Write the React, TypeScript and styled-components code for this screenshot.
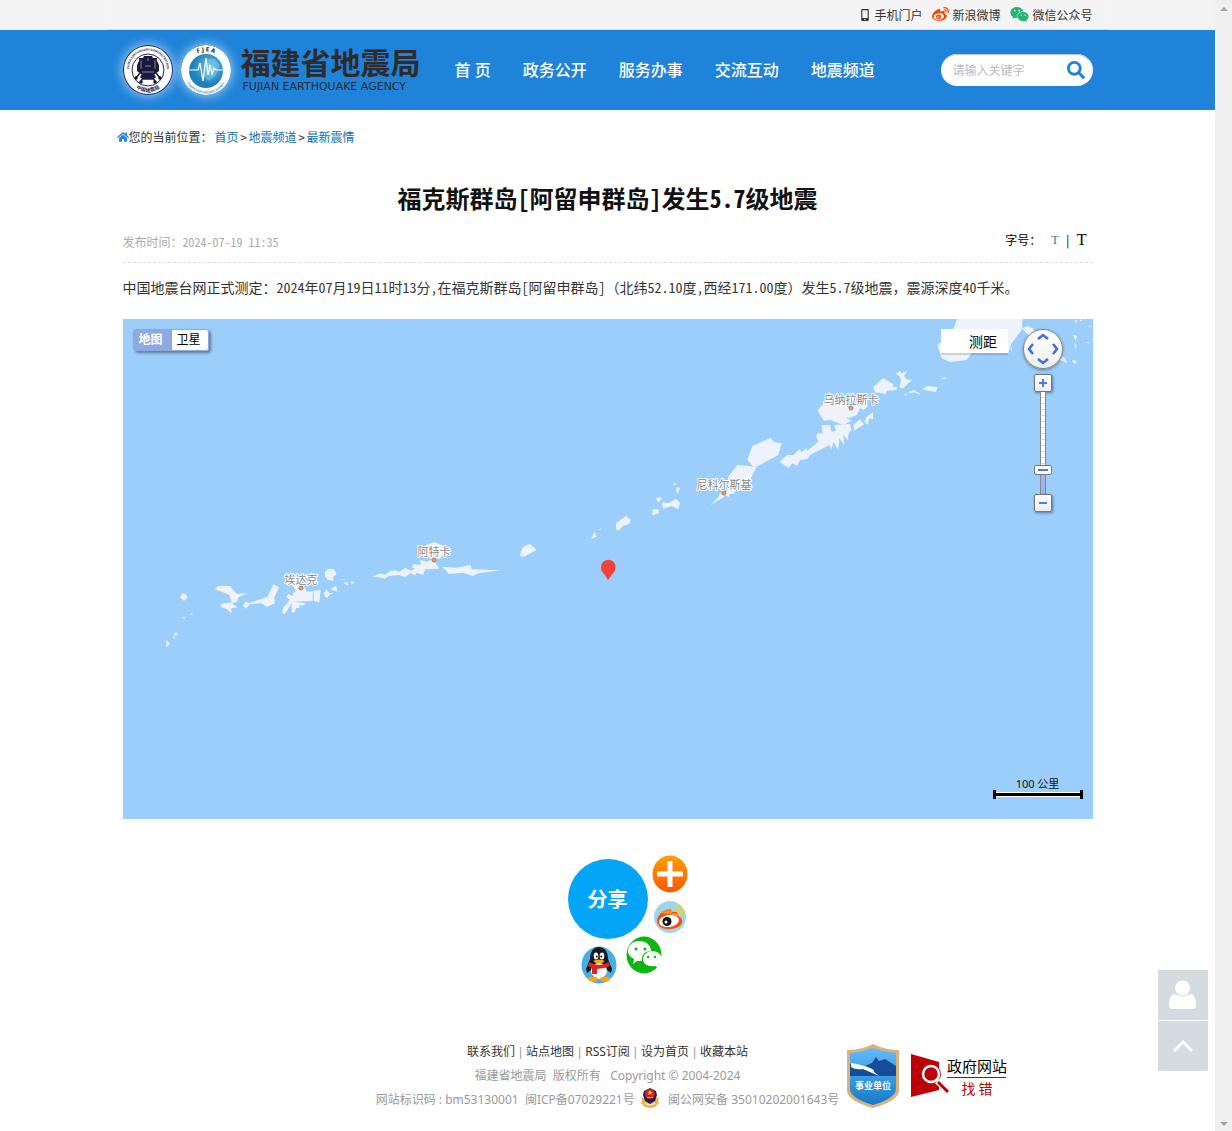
import React from "react";
import styled, { createGlobalStyle } from "styled-components";
import { FaHome, FaMobileAlt, FaSearch, FaWeibo, FaWeixin } from "react-icons/fa";

const song = `"Noto Sans CJK SC", sans-serif`;
const hei = `"Noto Sans", "Noto Sans CJK SC", sans-serif`;
const blue = "#1f83d9";

const GlobalStyle = createGlobalStyle`
  *, *::before, *::after { box-sizing: border-box; }
  body { margin: 0; background: #fff; color: #333; font: 12px/24px ${song}; }
  h1, p { margin: 0; }
  a { color: inherit; text-decoration: none; }
  button { border: 0; padding: 0; font: inherit; cursor: pointer; }
  svg { display: block; }
`;

const Shell = styled.div`
  display: grid;
  grid-template-columns: minmax(0, 1fr) 17px;
  min-height: 100vh;
`;

const ScrollRail = styled.div`
  display: flex;
  flex-direction: column;
  justify-content: space-between;
  align-items: center;
  padding: 7px 0 5px;
  background: #f0f0f0;
`;

const RailArrow = styled.span<{ $down?: boolean }>`
  border: 4px solid transparent;
  border-top: ${(p) => (p.$down ? "4px solid #a3a3a3" : "0")};
  border-bottom: ${(p) => (p.$down ? "0" : "4px solid #a3a3a3")};
`;

const Container = styled.div`
  width: 100%;
  max-width: 1000px;
  margin: 0 auto;
  padding: 0 15px;
`;

const TopBar = styled.div`
  background: #f3f3f3;
`;

const TopLinks = styled(Container)`
  display: flex;
  justify-content: flex-end;
  align-items: center;
  gap: 10px;
  height: 30px;
  border-bottom: 1px solid #d5dfe8;
  background: #f4f4f4;
`;

const TopLink = styled.a`
  display: flex;
  align-items: center;
  gap: 3px;
`;

const Header = styled.header`
  background: ${blue};
`;

const HeaderRow = styled(Container)`
  display: flex;
  align-items: center;
  height: 80px;
`;

const Brand = styled.a`
  display: flex;
  align-items: center;
  gap: 8px;
  color: #2f2a2c;
`;

const Emblem = styled.svg`
  width: 50px;
  height: 50px;
  border-radius: 50%;
  box-shadow: 0 0 12px rgba(255, 255, 255, 0.7);
`;

const BrandText = styled.span`
  display: flex;
  flex-direction: column;
  gap: 4px;
  padding: 0 0 2px 2px;
`;

const BrandName = styled.span`
  font: 700 30px/32px ${song};
`;

const BrandLatin = styled.span`
  padding-left: 2px;
  font: 11px/12px "DejaVu Sans", sans-serif;
`;

const Nav = styled.nav`
  display: flex;
  gap: 32px;
  margin-left: 34px;
  color: #fff;
  font: 500 16px/24px ${hei};
`;

const SearchBox = styled.form`
  display: flex;
  align-items: center;
  width: 152px;
  height: 32px;
  margin-left: auto;
  padding: 0 8px 0 12px;
  border-radius: 16px;
  background: #fff;
  box-shadow: inset 0 1px 1px #bbb;
`;

const SearchInput = styled.input`
  flex: 1;
  min-width: 0;
  border: 0;
  padding: 0;
  outline: 0;
  background: transparent;
  font: 12px/24px ${song};
  &::placeholder { color: #bbb; }
`;

const SearchButton = styled.button`
  background: none;
  color: ${blue};
`;

const Crumbs = styled.nav`
  display: flex;
  align-items: center;
  height: 54px;
  margin-left: -6px;
  a { color: #0c6fb5; }
`;

const CrumbLabel = styled.span`
  padding-right: 2px;
`;

const CrumbMark = styled.span`
  width: 10px;
  text-align: center;
`;

const Title = styled.h1`
  margin-top: 16px;
  color: #111;
  text-align: center;
  font: 700 24px/36px ${song};
  font-feature-settings: "hwid";
`;

const Meta = styled.div`
  display: flex;
  justify-content: space-between;
  align-items: center;
  height: 47px;
  padding-top: 6px;
  border-bottom: 1px dashed #ddd;
  color: #aaa;
  font-feature-settings: "hwid";
`;

const FontSizes = styled.div`
  display: flex;
  align-items: center;
  gap: 6px;
  height: 24px;
  margin: -4px 6px 0 0;
  color: #000;
`;

const SizeLabel = styled.span`
  padding-right: 4px;
`;

const SizeButton = styled.button<{ $large?: boolean }>`
  background: none;
  color: ${(p) => (p.$large ? "#000" : "#1479c4")};
  font: ${(p) => (p.$large ? "16px" : "12px")}/24px "Liberation Serif", serif;
`;

const Story = styled.p`
  padding: 10px 0 17px;
  font: 14px/29px ${song};
`;

const HalfWidth = styled.span`
  font-feature-settings: "hwid";
`;

const MapFrame = styled.section`
  position: relative;
  height: 500px;
  overflow: hidden;
  background: #9bcefa;
`;

const MapCanvas = styled.svg`
  width: 100%;
  height: 100%;
`;

const MapTypes = styled.div`
  position: absolute;
  top: 10px;
  left: 10px;
  display: flex;
  border-radius: 3px;
  box-shadow: 2px 2px 3px rgba(0, 0, 0, 0.4);
`;

const MapType = styled.button<{ $active?: boolean }>`
  width: 38px;
  height: 22px;
  padding: 0 2px 2px 0;
  border: 1px solid #8ea8e0;
  border-radius: ${(p) => (p.$active ? "3px 0 0 3px" : "0 3px 3px 0")};
  background: ${(p) => (p.$active ? "#8ea8e0" : "#fff")};
  color: ${(p) => (p.$active ? "#fff" : "#000")};
  font: ${(p) => (p.$active ? 700 : 400)} 12px/18px ${song};
`;

const Measure = styled.button`
  position: absolute;
  top: 10px;
  right: 85px;
  width: 67px;
  height: 24px;
  padding-left: 18px;
  background: #fff;
  box-shadow: 0 2px 0 rgba(0, 0, 0, 0.15);
  color: #000;
  font: 14px/24px ${song};
`;

const MapControl = styled.div`
  position: absolute;
  top: 10px;
  right: 30px;
  display: flex;
  flex-direction: column;
  align-items: center;
`;

const PanPad = styled.button`
  width: 40px;
  height: 40px;
  margin-bottom: 5px;
  border: 1px solid #888;
  border-radius: 50%;
  background: linear-gradient(#fff, #eee);
  box-shadow: 0 1px 3px rgba(0, 0, 0, 0.4);
`;

const ZoomButton = styled.button`
  display: grid;
  place-items: center;
  width: 18px;
  height: 18px;
  border: 1px solid #777;
  border-radius: 2px;
  background: linear-gradient(#fff, #eee);
  box-shadow: 1px 1px 3px rgba(0, 0, 0, 0.4);
`;

const ZoomSlider = styled.input`
  appearance: none;
  writing-mode: vertical-lr;
  direction: rtl;
  width: 18px;
  height: 102px;
  margin: 0;
  background:
    linear-gradient(90deg, #888 1px, transparent 1px 5px, #888 5px) center / 6px 100% no-repeat,
    linear-gradient(transparent 78px, #9db5f8 78px) center / 6px 100% no-repeat,
    repeating-linear-gradient(#fff 0 5px, #ddd 5px 6px) center / 6px 100% no-repeat;
  &::-webkit-slider-thumb {
    appearance: none;
    width: 18px;
    height: 10px;
    border: 1px solid #777;
    border-radius: 2px;
    background: linear-gradient(#4c7de0, #4c7de0) center / 10px 2px no-repeat, #fff;
  }
`;

const ScaleBar = styled.div`
  position: absolute;
  right: 10px;
  bottom: 20px;
  width: 90px;
  color: #111;
  text-align: center;
  font: 11px/12px ${hei};
`;

const Rule = styled.div`
  display: flex;
  align-items: center;
  height: 9px;
  border: solid #000;
  border-width: 0 3px;
  &::before {
    content: "";
    flex: 1;
    height: 5px;
    border: solid #fff;
    border-width: 1px 0;
    background: #000;
  }
`;

const Share = styled.section`
  position: relative;
  width: 120px;
  height: 130px;
  margin: 36px auto 0;
  left: 20px;
`;

const ShareMain = styled.button`
  width: 80px;
  height: 80px;
  margin-top: 4px;
  border-radius: 50%;
  background: #03a5f6;
  color: #fff;
  font: 700 20px/80px ${song};
`;

const ShareIcon = styled.button<{ $x: number; $y: number }>`
  position: absolute;
  left: ${(p) => p.$x}px;
  top: ${(p) => p.$y}px;
  background: none;
`;

const Footer = styled.footer`
  display: grid;
  grid-template-columns: 1fr auto 1fr;
  padding: 55px 0 16px;
  color: #999;
  text-align: center;
  font: 12px/24px ${hei};
  white-space: pre;
`;

const FooterText = styled.div`
  grid-column: 2;
`;

const FooterLinks = styled.p`
  display: flex;
  justify-content: center;
  a { color: #333; }
`;

const FooterBar = styled.span`
  padding: 0 4px;
  font-family: "Liberation Sans", sans-serif;
`;

const FooterRecord = styled.p`
  display: flex;
  justify-content: center;
  svg { margin: 0 2px; }
`;

const Badges = styled.div`
  display: flex;
  align-items: center;
  gap: 12px;
  padding-left: 8px;
`;

const SideTools = styled.div`
  position: fixed;
  right: 24px;
  bottom: 60px;
  display: grid;
  gap: 1px;
`;

const SideButton = styled.button`
  display: grid;
  place-items: center;
  width: 50px;
  height: 50px;
  background: #d4dbe1;
`;

/* Island outlines, grouped by map tile; each tile is drawn at three units per pixel. */
const tiles = [
  {
    at: [600, 360],
    shapes: [
      "685,120 735,118 750,160 740,175 755,182 730,195 690,180 672,182 652,152 672,128",
      "735,160 755,130 800,125 803,140 790,150 780,145 770,165 745,175",
      "815,120 825,120 820,137",
      "442,300 457,258 512,234 522,246 545,250 535,285 470,320 458,318",
      "385,350 412,315 470,320 450,360 452,385 410,388 400,402 388,402 388,412 375,405 370,412 330,437 355,412 358,402 380,395",
      "538,305 562,284 580,286 598,267 605,276 620,265 622,272 655,245 648,225 656,218 668,222 665,196 690,195 695,215 708,212 703,195 750,192 755,212 748,215 742,240 730,225 732,255 718,235 715,270 700,245 695,268 688,255 660,270 630,285 622,297 600,300 592,318 578,310 565,323",
      "760,195 780,178 792,193 762,212",
      "793,185 800,170 819,157 819,178 808,175 803,195",
      "820,80 850,54 868,66 880,72 878,82 892,82 890,90 862,92 855,103 840,98 825,98",
      "888,42 900,33 905,40 922,34 912,48 920,58 937,61 925,70 908,86 898,82 903,62 900,50",
      "912,104 924,98 916,108",
      "926,95 940,90 963,102 955,103 945,97 930,100",
      "967,86 985,78 1013,82 1008,96 975,90",
      "1022,57 1035,52 1040,57",
      "219,374 224,366 228,375",
      "228,388 232,380 240,385 232,402",
      "166,416 180,410 186,416 176,426",
      "186,432 190,426 205,430 228,416 240,428 235,448 215,438 190,446",
      "158,448 175,448 177,460 157,466",
      "48,490 78,468 92,478 88,492 68,498 56,512 48,508",
      "-27,536 -16,516 -10,530",
      "-6,510 3,504 0,510",
    ],
  },
  {
    at: [150, 520],
    shapes: [
      "195,208 205,198 240,198 260,222 292,220 265,232 262,245 246,250 262,262 243,265 245,280 228,266 213,262 213,252 245,247 238,225 215,215",
      "352,230 370,193 387,202 373,232 375,250 350,261 335,250 300,252 288,266 280,258 286,245 296,250",
      "425,190 460,195 470,215 488,214 488,243 428,245 467,250 462,256 450,256 447,264 438,264 435,277 425,278 425,250 405,282 396,278 400,262 420,240 408,230 415,222 428,228 430,218 438,214",
      "490,212 512,210 508,246 492,244",
      "525,155 535,147 552,148 560,162 550,170 550,182 535,180 525,170",
      "522,220 530,208 538,219 550,219 538,225 530,235 524,228",
      "540,208 558,198 563,215",
      "565,178 587,178 586,180",
      "580,190 592,186 596,197",
      "603,182 614,187 604,194",
      "90,232 98,219 110,226 110,235 102,243",
      "93,289 108,293 104,297",
      "120,284 125,279 129,284",
      "70,352 78,333 84,347 76,345 72,357",
      "50,360 60,372 48,382",
      "668,170 690,160 705,165 718,155 735,150 748,155 765,144 785,152 795,145 786,142 790,132 812,135 810,120 830,125 850,118 868,146 825,148 820,165 800,158 795,166 780,160 765,172 748,165 715,168 705,176 688,172",
      "828,75 855,66 880,78 885,100 870,116 840,116 830,100",
      "877,141 920,143 962,135 965,148 1052,151 985,160 968,168 940,158 895,162 888,152",
      "1112,98 1118,82 1140,72 1160,90 1122,110 1110,108",
    ],
  },
  {
    at: [900, 310],
    shapes: [
      "172,27 368,27 365,60 335,100 325,130 215,130 200,150 150,156 125,145 112,105 125,95 125,85 160,57",
      "365,55 385,48 400,57 415,80 400,90",
      "478,150 490,138 502,158",
      "516,152 526,150 530,160 520,160",
      "523,98 530,106 526,122",
      "520,75 532,78 526,92",
      "525,30 532,32 528,45",
      "540,25 546,32 540,34",
      "558,97 570,97 566,101",
      "565,50 572,45 572,52",
      "332,112 336,116 333,126",
    ],
  },
];

const towns = [
  { name: "乌纳拉斯卡", x: 851, y: 404, dot: [851, 408] },
  { name: "尼科尔斯基", x: 724, y: 489, dot: [724, 493] },
  { name: "阿特卡", x: 434, y: 556, dot: [434, 560] },
  { name: "埃达克", x: 301, y: 584, dot: [301, 588] },
];

function AdministrationEmblem() {
  return (
    <Emblem viewBox="0 0 50 50">
      <circle cx="25" cy="25" r="25" fill="#28234d" />
      <circle cx="25" cy="25" r="24" fill="#fff" />
      <circle cx="25" cy="25" r="16" fill="none" stroke="#28234d" strokeWidth="1" />
      <path id="ringTop" d="M8 33A19 19 0 1 1 42 33" fill="none" />
      <path id="ringLow" d="M8 38A21 21 0 0 0 42 38" fill="none" />
      <g fill="#28234d" fontFamily={hei} fontWeight="700" textAnchor="middle">
        <text fontSize="3"><textPath href="#ringTop" startOffset="50%">CHINA EARTHQUAKE ADMINISTRATION</textPath></text>
        <text fontSize="5"><textPath href="#ringLow" startOffset="50%">中国地震局</textPath></text>
      </g>
      <path d="M21 11h8l1 2h4v3l2 4v6l-4 3H18l-4-3v-6l2-4v-3h4z" fill="#1d183d" />
      <path d="M20 28h10l2 4-3 2h-8l-3-2zM17 28l-4 5M33 28l4 5M20 33l-2 3M30 33l2 3" fill="#1d183d" stroke="#1d183d" strokeWidth="1.5" />
      <path d="M18 15v9M32 15v9M22 21h6M19 27h12M25 13v3" stroke="#fff" strokeWidth=".8" opacity=".6" />
      <g fill="#1d183d"><circle cx="13" cy="33" r="1.800" /><circle cx="18" cy="37" r="1.800" /><circle cx="32" cy="37" r="1.800" /><circle cx="37" cy="33" r="1.800" /></g>
    </Emblem>
  );
}

function FujianEmblem() {
  return (
    <Emblem viewBox="0 0 50 50">
      <radialGradient id="seaGlobe" cx=".6" cy=".4">
        <stop offset="0" stopColor="#71c3e8" />
        <stop offset="1" stopColor="#1e7fb9" />
      </radialGradient>
      <circle cx="25" cy="25" r="25" fill="#fff" />
      <circle cx="25" cy="26" r="17" fill="url(#seaGlobe)" />
      <path d="M24 14l10 0 5 6-4 10-7 6-6-5z" fill="#8bd0ec" opacity=".45" />
      <path d="M8 25h9l2-7 3 18 3-23 2 17 2-10 2 9 2-6 2 2h7" fill="none" stroke="#fff" strokeWidth="1.2" />
      <path id="fjTop" d="M9 16A18 18 0 0 1 41 16" fill="none" />
      <path id="fjLow" d="M4 33A22 22 0 0 0 46 33" fill="none" />
      <g fontFamily={hei} fontWeight="700" textAnchor="middle">
        <text fontSize="6" fill="#222"><textPath href="#fjTop" startOffset="50%">F J E A</textPath></text>
        <text fontSize="3" fill="#3b9ad3"><textPath href="#fjLow" startOffset="50%">FUJIAN EARTHQUAKE AGENCY</textPath></text>
      </g>
    </Emblem>
  );
}

function IslandMap() {
  return (
    <MapCanvas viewBox="123 319 970 500" preserveAspectRatio="xMidYMid slice" role="img" aria-label="震中位置">
      {tiles.map((tile) => (
        <g key={tile.at.join()} transform={`translate(${tile.at.join()}) scale(.33333)`} fill="#eef2fb">
          {tile.shapes.map((points) => <polygon key={points} points={points} />)}
        </g>
      ))}
      {towns.map((town) => (
        <g key={town.name}>
          <text x={town.x} y={town.y} textAnchor="middle" fontFamily={song} fontSize="11" fill="#888" stroke="#fff" strokeWidth="2" paintOrder="stroke">{town.name}</text>
          <circle cx={town.dot[0]} cy={town.dot[1]} r="2" fill="#dda278" stroke="#b77b55" />
        </g>
      ))}
      <path d="M608 580l-3-5c-3-3-4-5-4-8a7.300 7.300 0 0 1 14.600 0c0 3-1 5-4 8z" fill="#f5413a" />
    </MapCanvas>
  );
}

const MoreIcon = () => (
  <svg width="36" height="38" viewBox="0 0 36 38">
    <linearGradient id="moreFill" x2="0" y2="1"><stop stopColor="#ffa000" /><stop offset="1" stopColor="#ff5500" /></linearGradient>
    <ellipse cx="18" cy="19" rx="17.500" ry="18.500" fill="url(#moreFill)" />
    <path d="M18 6v26M5 19h26" stroke="#fff" strokeWidth="5" />
  </svg>
);

const WeiboIcon = () => (
  <svg width="32" height="32" viewBox="0 0 32 32">
    <circle cx="16" cy="16" r="16" fill="#9fd5e8" />
    <path d="M3 20C3 13 12 7 16 8c2 1 1 3 1 4 3-2 8-2 8 1v3c4 1 5 7-1 10-8 4-20 3-21-6z" fill="#ef5019" />
    <path d="M7 12c5-5 9-5 10-2v3c3-2 8-1 8 2z" fill="#f9902a" />
    <ellipse cx="15" cy="20" rx="10" ry="6" fill="#fff" transform="rotate(-8 15 20)" />
    <circle cx="13" cy="20.500" r="4.500" fill="#111" />
    <circle cx="12" cy="21" r="1.500" fill="#fff" />
    <path d="M20 10c4-1 6 2 5 5M21 5c6 0 9 4 8 10" fill="none" stroke="#e9d047" strokeWidth="2.500" />
  </svg>
);

const WechatIcon = () => (
  <svg width="36" height="38" viewBox="0 0 36 38">
    <ellipse cx="18" cy="19" rx="17.500" ry="18.500" fill="#0ab60f" />
    <path d="M13 5c7 0 12 4 12 10-6 0-10 4-9 10l-5 0-4 3 1-5c-3-2-6-4-6-8 0-6 5-10 11-10z" fill="#fff" />
    <path d="M26 15c6 0 10 4 10 8 0 3-2 5-4 6l1 3-4-2c-7 1-12-2-12-7 0-4 4-8 9-8z" fill="#fff" />
    <g fill="#0ab60f"><circle cx="10" cy="13" r="1.500" /><circle cx="19" cy="13" r="1.500" /><circle cx="22" cy="21" r="1.200" /><circle cx="29" cy="21" r="1.200" /></g>
  </svg>
);

const QqIcon = () => (
  <svg width="36" height="38" viewBox="0 0 36 38">
    <ellipse cx="18" cy="19" rx="17.500" ry="18.500" fill="#48aee6" />
    <path d="M9 13C9 5 13 1 18 1s9 4 9 12l4 10-1 4-4-3-2 9H12l-2-9-4 3-1-4z" fill="#151a20" />
    <ellipse cx="18" cy="25" rx="8" ry="8" fill="#fff" />
    <ellipse cx="15" cy="10" rx="2.300" ry="3.500" fill="#fff" /><ellipse cx="21" cy="10" rx="2.300" ry="3.500" fill="#fff" />
    <circle cx="15.700" cy="10.500" r="1" /><circle cx="20.300" cy="10.500" r="1" />
    <path d="M12 15q6-3 12 0-6 5-12 0z" fill="#f8a51b" />
    <path d="M8 16q10 6 20 0l1 4q-6 3-13 3v5h-5v-6l-4-2z" fill="#dd241d" />
    <ellipse cx="12" cy="33" rx="5" ry="2.500" fill="#f6a61c" /><ellipse cx="24" cy="33" rx="5" ry="2.500" fill="#f6a61c" />
  </svg>
);

const PoliceIcon = () => (
  <svg width="20" height="20" viewBox="0 0 20 20">
    <path d="M1 9l3 1 4 5h4l4-5 3-1-1 4 1 2-4 4-5 1-5-1-4-4 1-2z" fill="#e8b34b" />
    <path d="M10 0l6 3 1 4-2 6-5 3-5-3-2-6 1-4z" fill="#20204f" />
    <circle cx="10" cy="6" r="5" fill="#d91e1b" />
    <path d="M10 2l1 2h2l-2 1 1 2-2-1-2 1 1-2-2-1h2zM7 9h6v1H7z" fill="#f5c94a" />
    <path d="M5 14q5 4 10 0v2q-5 3-10 0z" fill="#f9e5a4" />
  </svg>
);

const InstitutionBadge = () => (
  <svg width="52" height="64" viewBox="0 0 52 64" role="img">
    <linearGradient id="shieldFill" x2="0" y2="1"><stop stopColor="#62bbfb" /><stop offset="1" stopColor="#147ac8" /></linearGradient>
    <path d="M0 6q14 0 26-6 12 6 26 6v40q0 11-26 18Q0 57 0 46z" fill="#ddb17a" />
    <path d="M3 9q12-1 23-5 11 4 23 5v36q0 9-23 16Q3 54 3 45z" fill="url(#shieldFill)" />
    <path d="M3 20l15 2 7-3 4-6 3 4 6-2 11 7v10H3z" fill="#174c9b" />
    <path d="M4 19q12 2 19 5 5 2 4 4l5 4q-9-4-16-7-8 1-12-2z" fill="#fff" />
    <text x="26" y="45" textAnchor="middle" fontFamily={song} fontWeight="700" fontSize="9" fill="#fff">事业单位</text>
  </svg>
);

const ErrorReportBadge = () => (
  <svg width="98" height="44" viewBox="0 0 98 44" role="img">
    <path d="M0 0l28 8v28L0 43z" fill="#bd0008" />
    <circle cx="20" cy="20" r="10" fill="#bd0008" />
    <circle cx="20" cy="20" r="8" fill="none" stroke="#fff" strokeWidth="2.500" />
    <path d="M26 27l12 11" stroke="#fff" strokeWidth="6" /><path d="M27 28l10 10" stroke="#bd0008" strokeWidth="3" />
    <path d="M36 23.500h59" stroke="#bd0008" />
    <text x="36" y="18" fontFamily={song} fontSize="15" fill="#000">政府网站</text>
    <text x="66" y="40" textAnchor="middle" fontFamily={song} fontSize="14" fill="#c00008">找 错</text>
  </svg>
);

/* Sets the Latin runs of a text in half-width glyphs and leaves the full-width punctuation whole. */
function MixedText({ children }: { children: string }) {
  return children.split(/([\x20-\x7e]+)/).map((run, i) => (i % 2 ? <HalfWidth key={i}>{run}</HalfWidth> : run));
}

export default function App() {
  return (
    <Shell>
      <GlobalStyle />
      <div>
        <TopBar>
          <TopLinks>
            <TopLink href="#"><FaMobileAlt size={12} />手机门户</TopLink>
            <TopLink href="#"><FaWeibo size={17} color="#f4480b" />新浪微博</TopLink>
            <TopLink href="#"><FaWeixin size={19} color="#25b473" />微信公众号</TopLink>
          </TopLinks>
        </TopBar>
        <Header>
          <HeaderRow>
            <Brand href="#">
              <AdministrationEmblem />
              <FujianEmblem />
              <BrandText>
                <BrandName>福建省地震局</BrandName>
                <BrandLatin>FUJIAN EARTHQUAKE AGENCY</BrandLatin>
              </BrandText>
            </Brand>
            <Nav>
              {["首 页", "政务公开", "服务办事", "交流互动", "地震频道"].map((item) => <a key={item} href="#">{item}</a>)}
            </Nav>
            <SearchBox>
              <SearchInput aria-label="搜索" placeholder="请输入关键字" />
              <SearchButton type="button" aria-label="搜索"><FaSearch size={18} /></SearchButton>
            </SearchBox>
          </HeaderRow>
        </Header>
        <Container as="main">
          <Crumbs>
            <FaHome size={12} color="#2486dc" /><CrumbLabel>您的当前位置：</CrumbLabel>
            <a href="#">首页</a><CrumbMark>&gt;</CrumbMark>
            <a href="#">地震频道</a><CrumbMark>&gt;</CrumbMark>
            <a href="#">最新震情</a>
          </Crumbs>
          <Title>福克斯群岛[阿留申群岛]发生5.7级地震</Title>
          <Meta>
            <span>发布时间：2024-07-19 11:35</span>
            <FontSizes>
              <SizeLabel>字号：</SizeLabel>
              <SizeButton>T</SizeButton>|<SizeButton $large>T</SizeButton>
            </FontSizes>
          </Meta>
          <Story>
            <MixedText>中国地震台网正式测定：2024年07月19日11时13分,在福克斯群岛[阿留申群岛]（北纬52.10度,西经171.00度）发生5.7级地震，震源深度40千米。</MixedText>
          </Story>
          <MapFrame>
            <IslandMap />
            <MapTypes>
              <MapType $active>地图</MapType>
              <MapType>卫星</MapType>
            </MapTypes>
            <Measure>测距</Measure>
            <MapControl>
              <PanPad aria-label="平移">
                <svg width="38" height="38" viewBox="0 0 38 38" fill="none" stroke="#3f6fd6" strokeWidth="2.500">
                  <path d="M14 9l5-4 5 4M14 29l5 4 5-4M9 14l-4 5 4 5M29 14l4 5-4 5" />
                </svg>
              </PanPad>
              <ZoomButton aria-label="放大"><svg width="8" height="8" stroke="#4c7de0" strokeWidth="2"><path d="M4 0v8M0 4h8" /></svg></ZoomButton>
              <ZoomSlider type="range" aria-label="缩放级别" defaultValue={21} />
              <ZoomButton aria-label="缩小"><svg width="8" height="8" stroke="#4c7de0" strokeWidth="2"><path d="M0 4h8" /></svg></ZoomButton>
            </MapControl>
            <ScaleBar>100 公里<Rule /></ScaleBar>
          </MapFrame>
          <Share>
            <ShareMain>分享</ShareMain>
            <ShareIcon $x={84} $y={0} aria-label="更多"><MoreIcon /></ShareIcon>
            <ShareIcon $x={86} $y={46} aria-label="微博"><WeiboIcon /></ShareIcon>
            <ShareIcon $x={58} $y={81} aria-label="微信"><WechatIcon /></ShareIcon>
            <ShareIcon $x={13} $y={91} aria-label="QQ"><QqIcon /></ShareIcon>
          </Share>
        </Container>
        <Footer>
          <FooterText>
            <FooterLinks>
              {["联系我们", "站点地图", "RSS订阅", "设为首页", "收藏本站"].map((item, i) => (
                <React.Fragment key={item}>{i > 0 && <FooterBar>|</FooterBar>}<a href="#">{item}</a></React.Fragment>
              ))}
            </FooterLinks>
            <p>{"福建省地震局  版权所有   Copyright © 2004-2024"}</p>
            <FooterRecord>{"网站标识码 : bm53130001  闽ICP备07029221号 "}<PoliceIcon />{"  闽公网安备 35010202001643号"}</FooterRecord>
          </FooterText>
          <Badges>
            <a href="#" aria-label="事业单位"><InstitutionBadge /></a>
            <ErrorReportBadge />
          </Badges>
        </Footer>
      </div>
      <ScrollRail aria-hidden="true"><RailArrow /><RailArrow $down /></ScrollRail>
      <SideTools>
        <SideButton aria-label="用户"><svg width="28" height="30" viewBox="0 0 28 30" fill="#fff"><path d="M6 14c-4 0-6 5-6 10 0 3 1 5 4 5h19c3 0 4-2 4-5 0-5-2-10-6-10-2 2-13 2-15 0z" /><circle cx="13.500" cy="8" r="8" stroke="#d4dbe1" strokeWidth="1" /></svg></SideButton>
        <SideButton aria-label="返回顶部"><svg width="20" height="12" viewBox="0 0 20 12" fill="none" stroke="#fff" strokeWidth="3"><path d="M1 11l9-9 9 9" /></svg></SideButton>
      </SideTools>
    </Shell>
  );
}
